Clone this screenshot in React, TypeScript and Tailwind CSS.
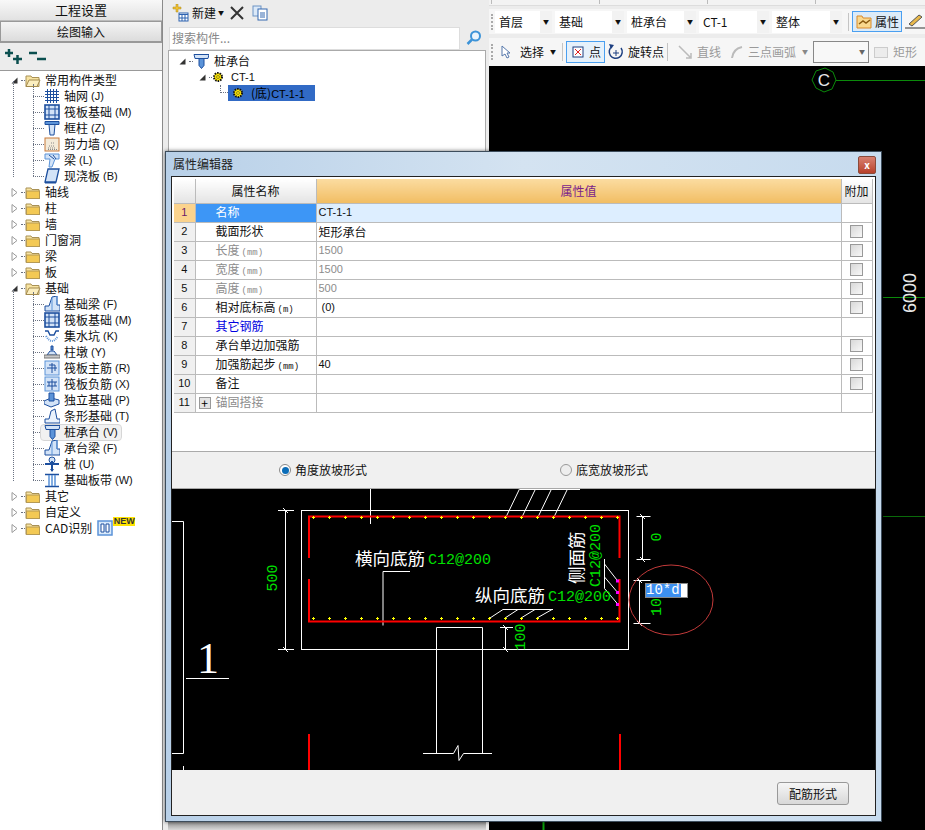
import React from "react";

const D = "#1d4f9e", M = "#5b93d8", L = "#d3e3f7";
const cjk = "[font-family:'Noto_Sans_CJK_SC','Liberation_Sans',sans-serif]";

function Ico({ k }: { k: string }) {
  const body: Record<string, React.ReactNode> = {
    grid: <g stroke={D} fill="none"><path d="M1 3.500h14M1 6.500h14M1 9.500h14M1 12.500h14M3.500 1v14M6.500 1v14M9.500 1v14M12.500 1v14" /></g>,
    raft: <g fill="none"><rect x="1" y="1" width="14" height="14" fill={L} stroke={D} strokeWidth="1.600" /><path d="M5 1v14M11 1v14M1 5h14M1 11h14" stroke={D} /></g>,
    column: <g><path d="M1 1.500h14v3H1z" fill={M} stroke={D} /><path d="M5 4.500h6L10 15H6z" fill={L} stroke={D} /></g>,
    wall: <g><rect x="1" y="2" width="14" height="13" fill="#f3ead9" stroke="#c87a3a" /><path d="M4 12h8M5 10h6M7 7h3M4 13.500h9" stroke="#888" strokeDasharray="1 1" /></g>,
    beam: <g><path d="M1 2h14v5l-4 0-3 8H5l1-8H1z" fill={L} stroke={M} /><path d="M5 3l5 4M9 3l3 4" stroke={D} /></g>,
    slab: <g><path d="M4 1h11l-3 13H1z" fill={L} stroke={D} strokeWidth="1.300" /><path d="M1 14h11v1.500H1z" fill={D} /></g>,
    fbeam: <g><path d="M8 1l5-1v9h3v6H1V10h4z" fill={L} stroke={D} /><path d="M8 1v14M13 0v9" stroke={M} /></g>,
    sump: <g fill="none"><path d="M1 3h3l2 4h4l2-4h3" stroke={D} strokeWidth="1.400" /><path d="M2 8q6 10 12 0" stroke={M} strokeDasharray="1 1" strokeWidth="2" /></g>,
    pier: <g><path d="M7 2h2v4H7z" fill={M} stroke={D} /><path d="M3 11l3-4h4l3 4z" fill={L} stroke={D} /><path d="M0 11h16v3H0z" fill="#c9c9c9" stroke="#777" /></g>,
    main: <g><rect x="1" y="1" width="14" height="14" fill={L} stroke={M} /><path d="M8 3v10M3 8h10M5 5h6v6" stroke={D} fill="none" /></g>,
    neg: <g><rect x="1" y="1" width="14" height="14" fill={L} stroke={M} /><path d="M8 3v11M3 6h10M3 10h10M5 6v4M11 6v4" stroke={D} fill="none" /></g>,
    iso: <g><path d="M0 9l7-3 8 2v4l-8 3-7-3z" fill={L} stroke={D} /><path d="M5 1h5v8H5z" fill={M} stroke={D} /></g>,
    strip: <g fill="none"><path d="M1 15v-4h4l2-8 4-2 2 10h3v4z" fill="#eaf2fc" stroke={D} /></g>,
    cap: <g><path d="M1 1.500h15l-1 4H2z" fill={L} stroke={D} /><path d="M6 5.500h5v7l-2.500 3-2.500-3z" fill={M} stroke={D} /></g>,
    pile: <g><circle cx="8" cy="4" r="3" fill={L} stroke={D} /><path d="M1 8h14M8 5v10" stroke={D} strokeWidth="2" /><path d="M6 13h4l-2 3z" fill={D} /></g>,
    band: <g stroke={D} fill="none"><path d="M1 2.500h14M1 14.500h14" strokeWidth="1.400" /><path d="M5 3v11M8 3v11M11 3v11" stroke={M} strokeWidth="1.500" /></g>,
    cad: <g fill="none"><rect x="1" y="1" width="14" height="14" fill="#d9e9fa" stroke={M} strokeWidth="1.500" /><path d="M4 4h3v8H4zM9 4h3v8H9z" fill="#fff" stroke={D} /></g>,
  };
  return <svg width="16" height="16" viewBox="0 0 16 16" className="shrink-0">{body[k]}</svg>;
}

function Folder({ open }: { open?: boolean }) {
  return (
    <svg width="16" height="13" viewBox="0 0 16 13" className="shrink-0">
      <path d="M1 2h5l1 1.500h7v9H1z" fill="#f7e3a2" stroke="#a99155" />
      {open ? <path d="M1 12.500L4 6h11l-3 6.500z" fill="#fbeebf" stroke="#a38a4e" /> : <rect x="1.500" y="5" width="13" height="7.500" fill="#f3c955" stroke="#b59a55" />}
    </svg>
  );
}

function Tri({ open }: { open?: boolean }) {
  return (
    <svg width="7" height="9" viewBox="0 0 7 9" className="shrink-0">
      {open ? <path d="M0.500 7.500h6v-6z" fill="#333" /> : <path d="M1 0.500l5 4-5 4z" fill="#fff" stroke="#999" />}
    </svg>
  );
}

function Top({ name, open, extra }: { name: string; open?: boolean; extra?: React.ReactNode }) {
  return (
    <div className="flex h-4 items-center pl-[11px]">
      <Tri open={open} />
      <span className="ml-[3px] w-[4px] border-b border-dotted border-gray-500" />
      <Folder open={open} />
      <span className="ml-[4px] whitespace-nowrap">{name}</span>
      {extra}
    </div>
  );
}

function Child({ icon, name, hk, hot }: { icon: string; name: string; hk: string; hot?: boolean }) {
  return (
    <div className="flex h-4 items-center pl-[33px]">
      <span className="w-[11px] border-b border-dotted border-gray-500" />
      <span className={`flex h-[15px] items-center ${hot ? "-ml-[3px] rounded-[3px] bg-[#f1f1f1] pl-[3px] pr-[3px] outline outline-[#d6d6d6]" : ""}`}>
        <Ico k={icon} />
        <span className="ml-[4px] whitespace-nowrap">{name}</span>
        <span className="ml-[3px] font-['Liberation_Sans'] text-[11px]">{hk}</span>
      </span>
    </div>
  );
}

function Group({ name, items }: { name: string; items: [string, string, string, boolean?][] }) {
  const h = (items.length - 1) * 16 + 8;
  return (
    <div className="relative">
      <Top name={name} open />
      {items.map(([i, n, k, hot]) => <Child key={n} icon={i} name={n} hk={k} hot={hot} />)}
      <span className="absolute left-[13px] top-[9px] border-l border-dotted border-gray-500" style={{ height: h + 8 }} />
      <span className="absolute left-[33px] top-[12px] border-l border-dotted border-gray-500" style={{ height: h + 4 }} />
    </div>
  );
}

function Combo({ t, w }: { t: string; w: number }) {
  return (
    <div className="mr-[3px] flex h-[22px] shrink-0 items-center bg-white pl-[4px]" style={{ width: w }}>
      <span className="flex-1 whitespace-nowrap">{t}</span>
      <span className="flex h-full w-[12px] items-center justify-center bg-[#f2f2f2] text-[6px]">▼</span>
    </div>
  );
}

function Grip() {
  return <span className="mx-[2px] h-[16px] w-[3px] border-l-2 border-dotted border-[#aaa]" />;
}
function Sep() {
  return <span className="mx-[3px] h-[18px] w-px shrink-0 bg-[#c4c4c4]" />;
}

const rows: [string, string, string, string, boolean][] = [
  ["1", "名称", "", "CT-1-1", false],
  ["2", "截面形状", "", "矩形承台", true],
  ["3", "长度", "(mm)", "1500", true],
  ["4", "宽度", "(mm)", "1500", true],
  ["5", "高度", "(mm)", "500", true],
  ["6", "相对底标高", "(m)", " (0)", true],
  ["7", "其它钢筋", "", "", false],
  ["8", "承台单边加强筋", "", "", true],
  ["9", "加强筋起步", "(mm)", "40", true],
  ["10", "备注", "", "", true],
  ["11", "锚固搭接", "", "", false],
];

function Drawing() {
  const pts = Array.from({ length: 20 }, (_, i) => 313.5 + i * 16);
  const mono = "Liberation Mono";
  const cj = "Noto Sans CJK SC";
  return (
    <svg viewBox="172 489 703 281" width="703" height="281" className="block">
      <g stroke="#fff" fill="none" strokeWidth="1">
        <path d="M172 521.500h11.500v232H172M183.500 766v4" />
        <path d="M186 678.500h43" />
        <path d="M278 510.500h16M278 649.500h16M285.500 510.500v139M283 508l5 5M283 647l5 5" />
        <rect x="301.500" y="510.500" width="327" height="139" />
        <path d="M370.500 489v35" />
        <path d="M506.500 516l13-27M522.500 516l13-27M538.500 516l13-27M554.500 516l13-27M520 489.500h60" />
        <path d="M410 571.500h-27v54" />
        <path d="M490 618l13-8.500h50M505 618l13-8.500M521 618l14-8.500M537 618l15-8.500" />
        <path d="M436.500 649.500V627.500h46v22M436.500 649.500V753.500M482.500 649.500V753.500" />
        <path d="M423 753.500h30.500l4.500-8 1 15 4.500-7h28.500" />
        <path d="M500 627.500h13M505.500 627.500v22M496 649.500h13M503 625l5 5M503 647l5 5" />
        <path d="M636.500 516.500h14M636.500 559.500h14M642.500 516.500v43M640 514l5 5M640 557l5 5" />
        <path d="M633.500 580.500h17M633.500 623.500h17M639.500 580.500v43M637 578l5 5M637 621l5 5" />
        <path d="M604.500 559v29.500M604.500 564l14 18M604.500 577l14 16.500M604.500 588.500l14 16.500" />
      </g>
      <path d="M309 558V516.500h310.500V558M309 579v42.500h310.500V579M309 734v36M620 734v36" stroke="#f00" strokeWidth="2" fill="none" />
      {pts.map((x) => (
        <g key={x} stroke="#ff0" strokeWidth="1">
          <path d={`M${x - 1.500} 517.500h3M${x} 516v3`} />
          <path d={`M${x - 1.500} 618.500h3M${x} 617v3`} />
        </g>
      ))}
      <path d="M616 581h3M616 592.500h3M616 604.500h3" stroke="#f0f" strokeWidth="3" />
      <ellipse cx="671" cy="600" rx="42" ry="35" fill="none" stroke="#c23a3a" />
      <text x="208" y="673" fill="#fff" fontFamily="Liberation Serif" fontSize="44" textAnchor="middle">1</text>
      <text x="355" y="565" fill="#fff" fontFamily={cj} fontSize="17.500">横向底筋</text>
      <text x="428" y="564" fill="#00e000" fontFamily={mono} fontSize="15">C12@200</text>
      <text x="475" y="602" fill="#fff" fontFamily={cj} fontSize="17.500">纵向底筋</text>
      <text x="548" y="601" fill="#00e000" fontFamily={mono} fontSize="15">C12@200</text>
      <text transform="translate(277 578) rotate(-90)" fill="#00e000" fontFamily={mono} fontSize="15" textAnchor="middle">500</text>
      <text transform="translate(525 637) rotate(-90)" fill="#00e000" fontFamily={mono} fontSize="15" textAnchor="middle">100</text>
      <text transform="translate(661 537) rotate(-90)" fill="#00e000" fontFamily={mono} fontSize="15" textAnchor="middle">0</text>
      <text transform="translate(661 607) rotate(-90)" fill="#00e000" fontFamily={mono} fontSize="15" textAnchor="middle">10</text>
      <text transform="translate(583 584) rotate(-90)" fill="#fff" fontFamily={cj} fontSize="17.500">侧面筋</text>
      <text transform="translate(600 587) rotate(-90)" fill="#00e000" fontFamily={mono} fontSize="15">C12@200</text>
    </svg>
  );
}

function Dialog() {
  return (
    <div className="absolute left-[165px] top-[151px] flex h-[671px] w-[717px] flex-col border border-[#3d4d5c] bg-gradient-to-r from-[#b8d0e8] via-[#d4e3f1] to-[#c7dbee] px-[5px] pb-[5px] shadow-[0_0_4px_rgba(0,0,0,0.6)]">
      <div className="flex h-[24px] shrink-0 items-center justify-between pl-[2px] text-[#222]">
        <span>属性编辑器</span>
        <span className="mt-[2px] flex h-[18px] w-[18px] items-center justify-center rounded-[2px] border border-[#8a4a3a] bg-gradient-to-b from-[#d88070] to-[#b8402a] text-[10px] font-bold leading-none text-white">x</span>
      </div>
      <div className="flex min-h-0 flex-1 flex-col border border-[#222] bg-[#f0f0f0]">
        <div className="h-[275px] shrink-0 border-b border-[#aaa] bg-white pl-[2px] pt-[2px]">
          <table className="table-fixed border-collapse">
            <thead>
              <tr className="h-[24px] border-b border-[#bbb]">
                <th className="w-[21px] border-r border-[#bbb] bg-gradient-to-b from-white to-[#e4e4e4]" />
                <th className="w-[121px] border-r border-[#bbb] bg-gradient-to-b from-white to-[#e4e4e4] text-center font-normal">属性名称</th>
                <th className="w-[525px] border-r border-[#bbb] bg-gradient-to-b from-[#fbdca0] to-[#f1bd62] text-center font-normal text-[#7a1e8a]">属性值</th>
                <th className="w-[31px] border-r border-[#bbb] bg-gradient-to-b from-white to-[#e4e4e4] text-center font-normal">附加</th>
              </tr>
            </thead>
            <tbody>
              {rows.map(([n, name, unit, val, chk], i) => {
                const gray = i >= 2 && i <= 4 || i === 10;
                const sel = i === 0;
                return (
                  <tr key={n} className="h-[19px] border-b border-[#bbb] leading-none">
                    <td className={`border-r border-[#bbb] p-0 text-center font-['Liberation_Sans'] text-[11px] ${sel ? "bg-[#fbd38d] text-[#6a1a6a]" : "bg-[#f0f0f0]"}`}>{n}</td>
                    <td className={`border-r border-[#bbb] p-0 pl-[20px] ${sel ? "bg-[#3d96f6] text-white" : gray ? "text-[#8c8c8c]" : i === 6 ? "text-[#0000e0]" : ""} relative`}>
                      {i === 10 && <span className="absolute left-[3px] top-[3px] flex h-[12px] w-[12px] items-center justify-center border border-[#999] bg-[#e4e4e4] text-[12px] leading-none text-black">+</span>}
                      {name}<span className="ml-[2px] font-['Liberation_Mono'] text-[9px]">{unit}</span>
                    </td>
                    <td className={`whitespace-pre border-r border-[#bbb] p-0 pl-[2px] ${sel ? "bg-[#ddeeff]" : ""} ${gray ? "text-[#8c8c8c]" : ""} ${i === 1 ? "" : "font-['Liberation_Sans'] text-[11px]"}`}>{val}</td>
                    <td className="border-r border-[#bbb] p-0">
                      {chk && <span className="mx-auto block h-[13px] w-[13px] border border-[#999] bg-gradient-to-br from-[#d8d8d8] to-[#f8f8f8]" />}
                    </td>
                  </tr>
                );
              })}
            </tbody>
          </table>
        </div>
        <div className="flex h-[37px] shrink-0 items-center border-b border-[#a8a8a8]">
          <span className="ml-[107px] flex h-[12px] w-[12px] items-center justify-center rounded-full border border-[#888] bg-white">
            <span className="h-[7px] w-[7px] rounded-full bg-[#0a6cb8]" />
          </span>
          <span className="ml-[4px] w-[72px] whitespace-nowrap">角度放坡形式</span>
          <span className="ml-[193px] h-[12px] w-[12px] rounded-full border border-[#999] bg-[#eee]" />
          <span className="ml-[4px] whitespace-nowrap">底宽放坡形式</span>
        </div>
        <div className="relative h-[281px] w-[703px] shrink-0 bg-black">
          <Drawing />
          <div className="absolute left-[473px] top-[94px] flex h-[15px] w-[43px] border border-[#888] bg-white font-['Liberation_Mono'] text-[14px] leading-[13px] text-white">
            <span className="w-[35px] whitespace-nowrap bg-[#3d8ff0]">10*d</span>
          </div>
        </div>
        <div className="flex flex-1 items-start justify-end pr-[26px] pt-[12px]">
          <button className="h-[23px] w-[72px] rounded-[3px] border border-[#999] bg-gradient-to-b from-[#f6f6f6] to-[#d8d8d8] text-[12px]">配筋形式</button>
        </div>
      </div>
    </div>
  );
}

export default function App() {
  return (
    <div className={`relative flex h-[830px] w-[925px] overflow-hidden bg-[#ececec] text-[12px] leading-none text-[#111] ${cjk}`}>
      {/* Left panel */}
      <aside className="flex h-full w-[163px] shrink-0 flex-col border-r border-[#8a8a8a]">
        <div className="flex h-[21px] shrink-0 items-center justify-center border-b border-[#bbb] bg-gradient-to-b from-[#f8f8f8] to-[#e2e2e2] pb-[2px] text-[13px]">工程设置</div>
        <div className="flex h-[22px] shrink-0 items-center justify-center border border-b-2 border-[#999] bg-gradient-to-b from-[#f4f4f4] to-[#dcdcdc]">绘图输入</div>
        <div className="flex h-[27px] shrink-0 items-center gap-[7px] pl-[5px]">
          <svg width="17" height="15" viewBox="0 0 17 15"><path d="M0 4h8M4 0v8M8 10h9M12.500 6v9" stroke="#0b4f4f" strokeWidth="2.500" /></svg>
          <svg width="17" height="15" viewBox="0 0 17 15"><path d="M0 4h8M8 10h9" stroke="#0b4f4f" strokeWidth="2.500" /></svg>
        </div>
        <div className="flex-1 border-t border-[#999] bg-white pt-[1px]">
          <Group name="常用构件类型" items={[
            ["grid", "轴网", "(J)"], ["raft", "筏板基础", "(M)"], ["column", "框柱", "(Z)"], ["wall", "剪力墙", "(Q)"], ["beam", "梁", "(L)"], ["slab", "现浇板", "(B)"],
          ]} />
          {["轴线", "柱", "墙", "门窗洞", "梁", "板"].map((n) => <Top key={n} name={n} />)}
          <Group name="基础" items={[
            ["fbeam", "基础梁", "(F)"], ["raft", "筏板基础", "(M)"], ["sump", "集水坑", "(K)"], ["pier", "柱墩", "(Y)"], ["main", "筏板主筋", "(R)"], ["neg", "筏板负筋", "(X)"], ["iso", "独立基础", "(P)"], ["strip", "条形基础", "(T)"], ["cap", "桩承台", "(V)", true], ["fbeam", "承台梁", "(F)"], ["pile", "桩", "(U)"], ["band", "基础板带", "(W)"],
          ]} />
          {["其它", "自定义"].map((n) => <Top key={n} name={n} />)}
          <Top name="CAD识别" extra={<span className="ml-[5px] flex items-start"><Ico k="cad" /><span className="-mt-[3px] w-[22px] bg-[#ffe400] text-center font-['Liberation_Sans'] text-[9px] font-bold leading-[9px] text-[#333]">NEW</span></span>} />
        </div>
      </aside>

      {/* Middle panel */}
      <section className="flex h-full w-[326px] shrink-0 flex-col pl-[5px] pr-[3px]">
        <div className="flex h-[26px] shrink-0 items-center pl-[3px]">
          <svg width="18" height="18" viewBox="0 0 18 18" className="shrink-0">
            <path d="M5 0h2v3h3v2H7v3H5V5H2V3h3z" fill="#f0c030" stroke="#a88a20" strokeWidth="0.500" />
            <rect x="8" y="9" width="9" height="8" fill="#fff" stroke="#2d62b0" />
            <path d="M8 10.500h9M11 11v6M14 11v6M8 14h9" stroke="#2d62b0" />
          </svg>
          <span className="ml-[3px]">新建</span>
          <span className="ml-[2px] text-[6px]">▼</span>
          <svg width="14" height="14" viewBox="0 0 14 14" className="ml-[6px]"><path d="M1 1l12 12M13 1L1 13" stroke="#333" strokeWidth="2" /></svg>
          <svg width="16" height="16" viewBox="0 0 16 16" className="ml-[8px]">
            <rect x="1" y="1" width="8" height="10" fill="#dbe9f8" stroke="#6d93c4" />
            <rect x="6" y="4" width="9" height="11" fill="#fff" stroke="#3468b0" />
            <path d="M8 8h5M8 10h5M8 12h5" stroke="#3468b0" />
          </svg>
        </div>
        <div className="flex h-[24px] shrink-0 items-center pl-[1px]">
          <div className="flex h-[23px] w-[291px] items-center border border-[#ddd] bg-white pl-[2px] text-[#888]">搜索构件...</div>
          <svg width="16" height="16" viewBox="0 0 16 16" className="ml-[6px]"><circle cx="9.500" cy="6" r="4.500" fill="#eaf4fc" stroke="#3c93d8" strokeWidth="2" /><path d="M6 9.500L1.500 14" stroke="#3c93d8" strokeWidth="2.500" /></svg>
        </div>
        <div className="flex-1 border border-[#aaa] bg-white pt-[2px]">
          <div className="flex h-4 items-center pl-[10px]">
            <Tri open /><span className="ml-[3px] w-[4px] border-b border-dotted border-gray-500" />
            <Ico k="cap" />
            <span className="ml-[5px] text-[12px]">桩承台</span>
          </div>
          <div className="flex h-4 items-center pl-[30px]">
            <Tri open /><span className="ml-[3px] w-[3px] border-b border-dotted border-gray-500" />
            <Gear />
            <span className="ml-[7px] font-['Liberation_Sans'] text-[11px]">CT-1</span>
          </div>
          <div className="relative flex h-4 items-center pl-[59px]">
            <span className="absolute left-[51px] top-0 h-[8px] w-[8px] border-b border-l border-dotted border-gray-500" />
            <div className="flex h-[16px] w-[87px] items-center bg-[#316ac5] pl-[4px] text-black">
              <Gear />
              <span className="ml-[7px] whitespace-nowrap">(底)<span className="font-['Liberation_Sans'] text-[11px]">CT-1-1</span></span>
            </div>
          </div>
        </div>
        <div className="h-[9px] shrink-0 bg-gradient-to-b from-[#8f8f8f] to-[#d8d8d8]" />
      </section>

      {/* Right panel */}
      <section className="flex h-full min-w-0 flex-1 flex-col">
        <div className="flex h-[6px] shrink-0 items-start gap-[107px] border-b border-[#ddd] bg-[#f3f3f3] pl-[2px]">
          <span className="h-[4px] w-px bg-[#bbb]" />
          <span className="h-[4px] w-px bg-[#bbb]" />
          <span className="h-[4px] w-px bg-[#bbb]" />
          <span className="h-[4px] w-px bg-[#bbb]" />
        </div>
        <div className="mt-[3px] flex h-[25px] shrink-0 items-center bg-[#f6f6f6]">
          <Grip />
          <span className="w-[1px]" />
          <Combo t="首层" w={57} />
          <Combo t="基础" w={69} />
          <Combo t="桩承台" w={69} />
          <Combo t="CT-1" w={70} />
          <Combo t="整体" w={70} />
          <Sep />
          <span className="flex h-[21px] w-[50px] shrink-0 items-center border border-[#4a9ff0] bg-[#dcebf8] pl-[3px]">
            <svg width="16" height="14" viewBox="0 0 16 14" className="shrink-0"><path d="M1 1h5l1 2h8v10H1z" fill="#f9d88e" stroke="#d98a2a" /><path d="M3 9l4-3 3 2 4-3" stroke="#8a5a10" fill="none" strokeWidth="1.500" /></svg>
            <span className="ml-[3px] whitespace-nowrap">属性</span>
          </span>
          <svg width="20" height="16" viewBox="0 0 20 16" className="ml-[3px] shrink-0"><path d="M4 10L14 1l3 2L7 12z" fill="#e8b84a" stroke="#555" /><path d="M0 14h20" stroke="#333" /></svg>
        </div>
        <div className="mt-[4px] flex h-[28px] shrink-0 items-center bg-[#f6f6f6]">
          <Grip />
          <svg width="10" height="14" viewBox="0 0 10 14" className="ml-[5px] shrink-0"><path d="M1 1v10l3-2 2 4 2-1-2-4h3z" fill="#fff" stroke="#5577aa" /></svg>
          <span className="ml-[9px]">选择</span>
          <span className="ml-[6px] mr-[3px] text-[6px]">▼</span>
          <Sep />
          <span className="flex h-[22px] w-[39px] shrink-0 items-center border border-[#4a9ff0] bg-[#e6f1fb] pl-[5px]">
            <svg width="12" height="12" viewBox="0 0 12 12"><rect x="1" y="1" width="10" height="10" fill="#fff" stroke="#1d3f80" /><path d="M3 3l6 6M9 3l-6 6" stroke="#e02020" /></svg>
            <span className="ml-[5px]">点</span>
          </span>
          <svg width="16" height="16" viewBox="0 0 16 16" className="ml-[3px] shrink-0"><path d="M13 4a6.500 6.500 0 1 1-9-1.500" fill="none" stroke="#1d3f80" strokeWidth="1.500" /><path d="M8 6v6M5 9h6" stroke="#1d3f80" /><path d="M1 0l5 1-3 4z" fill="#1d3f80" /></svg>
          <span className="ml-[4px] whitespace-nowrap">旋转点</span>
          <Sep />
          <svg width="15" height="15" viewBox="0 0 15 15" className="ml-[7px] shrink-0"><path d="M1 1l12 12M13 8v5H8" stroke="#bbb" strokeWidth="1.500" fill="none" /></svg>
          <span className="ml-[4px] whitespace-nowrap text-[#9a9a9a]">直线</span>
          <svg width="14" height="14" viewBox="0 0 14 14" className="ml-[9px] shrink-0"><path d="M2 13Q3 4 12 2" stroke="#bbb" strokeWidth="2" fill="none" /></svg>
          <span className="ml-[4px] whitespace-nowrap text-[#9a9a9a]">三点画弧</span>
          <span className="ml-[6px] text-[6px] text-[#888]">▼</span>
          <span className="ml-[5px] flex h-[22px] w-[56px] shrink-0 items-center justify-end border border-[#888] bg-[#f8f8f8] pr-[3px] text-[6px] text-[#666]">▼</span>
          <span className="ml-[5px] h-[11px] w-[14px] shrink-0 border border-[#ccc] bg-[#ececec]" />
          <span className="ml-[5px] shrink-0 whitespace-nowrap text-[#9a9a9a]">矩形</span>
        </div>
        <div className="flex-1 bg-black">
          <svg viewBox="489 66 436 764" width="436" height="764" className="block">
            <path d="M836 80.500h89M883 297.500h42" stroke="#0b8a0b" fill="none" />
            <path d="M883 516.500h42" stroke="#0a6a0a" fill="none" />
            <path d="M543.500 822v8" stroke="#0ba00b" strokeWidth="2" />
            <polygon points="836,80 833,72 825,68 816,71 812,80 816,88 824,92 832,89" fill="none" stroke="#0b8a0b" />
            <text x="824" y="86" fill="#e8e8e8" fontFamily="Liberation Sans" fontSize="17" textAnchor="middle">C</text>
            <text transform="translate(916 293) rotate(-90)" fill="#e8e8e8" fontFamily="Liberation Sans" fontSize="18" textAnchor="middle">6000</text>
          </svg>
        </div>
      </section>

      <Dialog />
    </div>
  );
}

function Gear() {
  return (
    <svg width="12" height="12" viewBox="0 0 12 12" className="shrink-0">
      <circle cx="6" cy="6" r="4" fill="#ffe800" stroke="#111" strokeDasharray="1.500 1" strokeWidth="2" />
      <circle cx="6" cy="6" r="1.500" fill="#ffe800" stroke="#333" strokeWidth="0.500" />
    </svg>
  );
}
